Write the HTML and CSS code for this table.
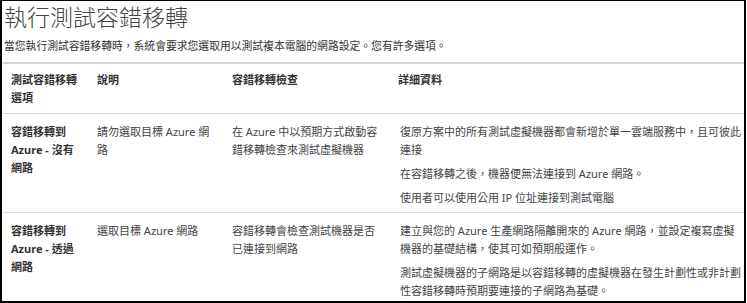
FILE: index.html
```html
<!DOCTYPE html>
<html lang="zh-Hant">
<head>
<meta charset="utf-8">
<link rel="stylesheet" href="styles.css">
</head>
<body>
<div class="frame">
  <h1 class="title">執行測試容錯移轉</h1>
  <p class="intro">當您執行測試容錯移轉時，系統會要求您選取用以測試複本電腦的網路設定。您有許多選項。</p>
  <table class="grid">
    <colgroup>
      <col class="c1"><col class="c2"><col class="c3"><col class="c4">
    </colgroup>
    <thead>
      <tr>
        <th>測試容錯移轉選項</th>
        <th>說明</th>
        <th>容錯移轉檢查</th>
        <th>詳細資料</th>
      </tr>
    </thead>
    <tbody>
      <tr>
        <td class="opt">容錯移轉到 Azure - 沒有網路</td>
        <td>請勿選取目標 Azure 網路</td>
        <td>在 Azure 中以預期方式啟動容錯移轉檢查來測試虛擬機器</td>
        <td class="details">
          <p>復原方案中的所有測試虛擬機器都會新增於單一雲端服務中，且可彼此連接</p>
          <p>在容錯移轉之後，機器便無法連接到 Azure 網路。</p>
          <p>使用者可以使用公用 IP 位址連接到測試電腦</p>
        </td>
      </tr>
      <tr class="last">
        <td class="opt">容錯移轉到 Azure - 透過網路</td>
        <td>選取目標 Azure 網路</td>
        <td>容錯移轉會檢查測試機器是否已連接到網路</td>
        <td class="details">
          <p>建立與您的 Azure 生產網路隔離開來的 Azure 網路，並設定複寫虛擬機器的基礎結構，使其可如預期般運作。</p>
          <p>測試虛擬機器的子網路是以容錯移轉的虛擬機器在發生計劃性或非計劃性容錯移轉時預期要連接的子網路為基礎。</p>
        </td>
      </tr>
    </tbody>
  </table>
</div>
</body>
</html>
```

FILE: styles.css
```css
html, body {
  margin: 0;
  padding: 0;
  background: #fff;
}

.frame {
  box-sizing: border-box;
  width: 746px;
  height: 303px;
  border-top: 1px solid #000;
  border-left: 2px solid #000;
  border-right: 2px solid #000;
  border-bottom: 2px solid #000;
  overflow: hidden;
  font-family: "Noto Sans", "Noto Sans CJK TC", sans-serif;
  color: #444;
}

.title {
  margin: 0 0 0 2px;
  font-size: 23px;
  line-height: 32px;
  font-weight: 300;
  color: #444;
}

.intro {
  margin: 4px 0 7px 2px;
  font-size: 10.8px;
  line-height: 18px;
  color: #333;
}

.grid {
  margin-left: 1px;
  width: 741px;
  border-collapse: collapse;
  table-layout: fixed;
  font-size: 11px;
  line-height: 18px;
}

.c1 { width: 86px; }
.c2 { width: 135px; }
.c3 { width: 166px; }

.grid th {
  text-align: left;
  vertical-align: top;
  font-weight: bold;
  color: #333;
  padding: 7px 8px 6px 8px;
  border-top: 2px solid #d4d4d4;
  border-bottom: 1px solid #ddd;
}

.grid td {
  vertical-align: top;
  padding: 9px 8px 5px 8px;
  border-bottom: 1px solid #ddd;
  color: #444;
}

.grid td.details {
  padding-left: 10px;
  padding-right: 2px;
}

.grid td.opt {
  font-weight: bold;
  color: #333;
}

.grid td p {
  margin: 0 0 6px 0;
}

.grid td p:last-child {
  margin-bottom: 0;
}

.grid tr.last td {
  border-bottom: 3px solid #eee;
  padding-bottom: 2px;
}
```
